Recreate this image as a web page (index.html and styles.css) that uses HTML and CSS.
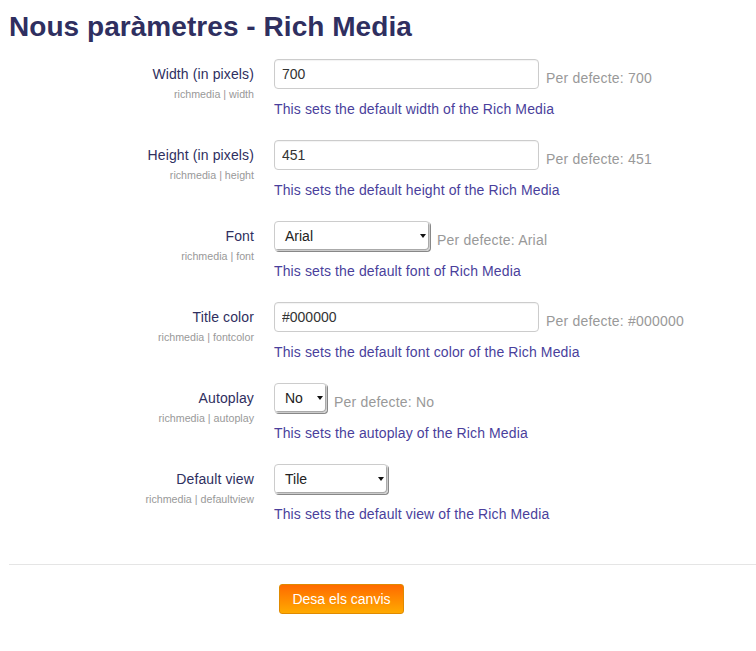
FILE: index.html
```html
<!DOCTYPE html>
<html>
<head>
<meta charset="utf-8">
<link rel="stylesheet" href="styles.css">
</head>
<body>
<h1 class="title">Nous paràmetres - Rich Media</h1>
<form class="settings">
  <div class="row">
    <div class="label"><div class="name">Width (in pixels)</div><div class="key">richmedia | width</div></div>
    <div class="field">
      <div class="control"><input class="text" type="text" value="700"><span class="default">Per defecte: 700</span></div>
      <div class="desc">This sets the default width of the Rich Media</div>
    </div>
  </div>
  <div class="row">
    <div class="label"><div class="name">Height (in pixels)</div><div class="key">richmedia | height</div></div>
    <div class="field">
      <div class="control"><input class="text" type="text" value="451"><span class="default">Per defecte: 451</span></div>
      <div class="desc">This sets the default height of the Rich Media</div>
    </div>
  </div>
  <div class="row">
    <div class="label"><div class="name">Font</div><div class="key">richmedia | font</div></div>
    <div class="field">
      <div class="control"><div class="select sel-font"><span>Arial</span><i class="arrow"></i></div><span class="default">Per defecte: Arial</span></div>
      <div class="desc">This sets the default font of Rich Media</div>
    </div>
  </div>
  <div class="row">
    <div class="label"><div class="name">Title color</div><div class="key">richmedia | fontcolor</div></div>
    <div class="field">
      <div class="control"><input class="text" type="text" value="#000000"><span class="default">Per defecte: #000000</span></div>
      <div class="desc">This sets the default font color of the Rich Media</div>
    </div>
  </div>
  <div class="row">
    <div class="label"><div class="name">Autoplay</div><div class="key">richmedia | autoplay</div></div>
    <div class="field">
      <div class="control"><div class="select sel-auto"><span>No</span><i class="arrow"></i></div><span class="default">Per defecte: No</span></div>
      <div class="desc">This sets the autoplay of the Rich Media</div>
    </div>
  </div>
  <div class="row">
    <div class="label"><div class="name">Default view</div><div class="key">richmedia | defaultview</div></div>
    <div class="field">
      <div class="control"><div class="select sel-view"><span>Tile</span><i class="arrow"></i></div></div>
      <div class="desc">This sets the default view of the Rich Media</div>
    </div>
  </div>
  <div class="actions">
    <button type="button" class="btn">Desa els canvis</button>
  </div>
</form>
</body>
</html>
```
FILE: styles.css
```css
html, body { margin: 0; padding: 0; background: #fff; }
body { font-family: "Liberation Sans", Arial, sans-serif; color: #333; padding: 0 0 0 9px; }
.title { font-size: 28px; font-weight: bold; color: #2f2f60; margin: 10px 0 0 0; line-height: 34px; letter-spacing: 0.05px; }
.settings { margin-top: 15px; }
.row { display: flex; gap: 20px; height: 81px; }
.label { width: 245px; text-align: right; padding-top: 5px; }
.name { font-size: 14px; line-height: 20px; color: #2f2f60; letter-spacing: 0.12px; }
.key { font-size: 10.7px; line-height: 14px; color: #999; margin-top: 3px; }
.field { display: flex; flex-direction: column; }
.control { display: flex; align-items: center; height: 30px; }
.text { box-sizing: border-box; width: 265px; height: 30px; border: 1px solid #ccc; border-radius: 4px; padding: 0 7px; font-family: "Liberation Sans", Arial, sans-serif; font-size: 14px; color: #333; margin: 0; box-shadow: inset 0 1px 1px rgba(0,0,0,0.05); }
.default { font-size: 14px; color: #999; margin-left: 7px; padding-top: 7px; letter-spacing: 0.2px; }
.desc { font-size: 14px; color: #4a3f9c; margin-top: 11px; line-height: 18px; letter-spacing: 0.12px; }
.select { box-sizing: border-box; height: 30px; border: 1px solid #ccc; border-radius: 4px; display: flex; align-items: center; position: relative; font-size: 14px; color: #222; padding-left: 10px; box-shadow: 1px 1px 0 #888, inset -1px -1px 0 #aaa; }
.select span { flex: 1; }
.arrow { width: 12px; height: 28px; display: flex; align-items: center; justify-content: center; position: relative; }
.arrow::after { content: ""; border-left: 3px solid transparent; border-right: 3px solid transparent; border-top: 4px solid #111; }
.sel-font { width: 156px; }
.sel-auto { width: 53px; }
.sel-view { width: 114px; }
.actions { border-top: 1px solid #e5e5e5; margin-top: 19px; padding: 19px 0 0 270px; }
.btn { font-family: "Liberation Sans", Arial, sans-serif; font-size: 14px; color: #fff; background: linear-gradient(#ff6a00, #ffaa00); border: 1px solid #e08a00; border-radius: 3px; height: 30px; width: 125px; padding: 0; }
```
